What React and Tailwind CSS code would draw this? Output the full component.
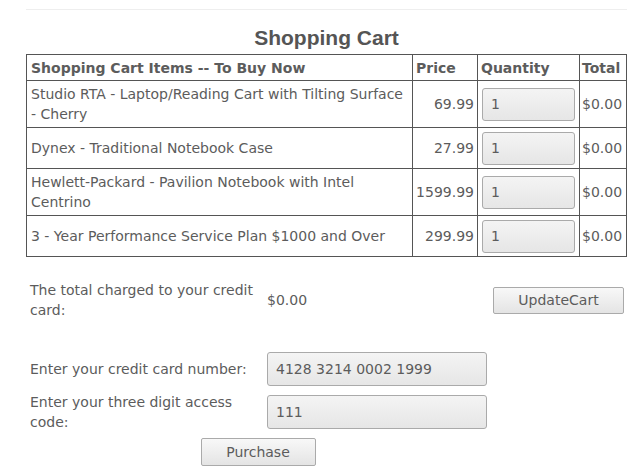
const items = [
  { name: 'Studio RTA - Laptop/Reading Cart with Tilting Surface - Cherry', price: '69.99', h: 'h-[47px]' },
  { name: 'Dynex - Traditional Notebook Case', price: '27.99', h: 'h-[41px]' },
  { name: 'Hewlett-Packard - Pavilion Notebook with Intel Centrino', price: '1599.99', h: 'h-[47px]' },
  { name: '3 - Year Performance Service Plan $1000 and Over', price: '299.99', h: 'h-[41px]' },
];

const inputCls =
  'rounded-[3px] border border-[#aaa] bg-gradient-to-b from-[#f4f4f4] to-[#e6e6e6] px-[8px] text-[#5c5c5c] outline-none';
const btnCls =
  'rounded-[2px] border border-[#aaa] bg-gradient-to-b from-[#f8f8f8] to-[#e4e4e4] text-[#5c5c5c]';

export default function App() {
  return (
    <div className="min-h-[471px] bg-white text-[14px] leading-[20px] text-[#5c5c5c] font-['DejaVu_Sans',sans-serif]">
      <div className="ml-[26px] w-[601px] pt-[9px]">
        <div className="h-px bg-[#eee]" />
        <h1 className="mt-[14px] mb-[2px] text-center text-[21px] leading-[28px] font-bold text-[#555] font-['Liberation_Sans',sans-serif]">
          Shopping Cart
        </h1>
        <table className="w-full border-collapse border border-[#555]">
          <thead>
            <tr className="h-[26px]">
              <th className="border border-[#555] px-[4px] text-left font-bold">Shopping Cart Items -- To Buy Now</th>
              <th className="w-[64px] border border-[#555] px-[3px] text-left font-bold">Price</th>
              <th className="w-[102px] border border-[#555] px-[3px] text-left font-bold">Quantity</th>
              <th className="w-[47px] border border-[#555] px-[2px] text-left font-bold">Total</th>
            </tr>
          </thead>
          <tbody>
            {items.map((it) => (
              <tr key={it.name} className={it.h}>
                <td className="border border-[#555] px-[4px]">{it.name}</td>
                <td className="border border-[#555] px-[3px] text-right">{it.price}</td>
                <td className="border border-[#555] px-[4px]">
                  <input className={inputCls + ' h-[33px] w-[93px]'} defaultValue="1" />
                </td>
                <td className="border border-[#555] px-[2px]">$0.00</td>
              </tr>
            ))}
          </tbody>
        </table>

        <div className="mt-[23px] flex items-center">
          <div className="w-[237px] pl-[4px] pr-[6px]">The total charged to your credit card:</div>
          <div className="w-[230px] pl-[4px]">$0.00</div>
          <button className={btnCls + ' h-[27px] w-[131px]'}>UpdateCart</button>
        </div>

        <div className="mt-[32px] flex items-center">
          <div className="w-[241px] pl-[4px]">Enter your credit card number:</div>
          <input className={inputCls + ' h-[34px] w-[220px]'} defaultValue="4128 3214 0002 1999" />
        </div>
        <div className="mt-[6px] flex items-center">
          <div className="w-[241px] pl-[4px] pr-[12px]">Enter your three digit access code:</div>
          <input className={inputCls + ' h-[34px] w-[220px]'} defaultValue="111" />
        </div>
        <div className="mt-[6px] w-[464px] flex justify-center">
          <button className={btnCls + ' h-[28px] w-[115px]'}>Purchase</button>
        </div>
      </div>
    </div>
  );
}
